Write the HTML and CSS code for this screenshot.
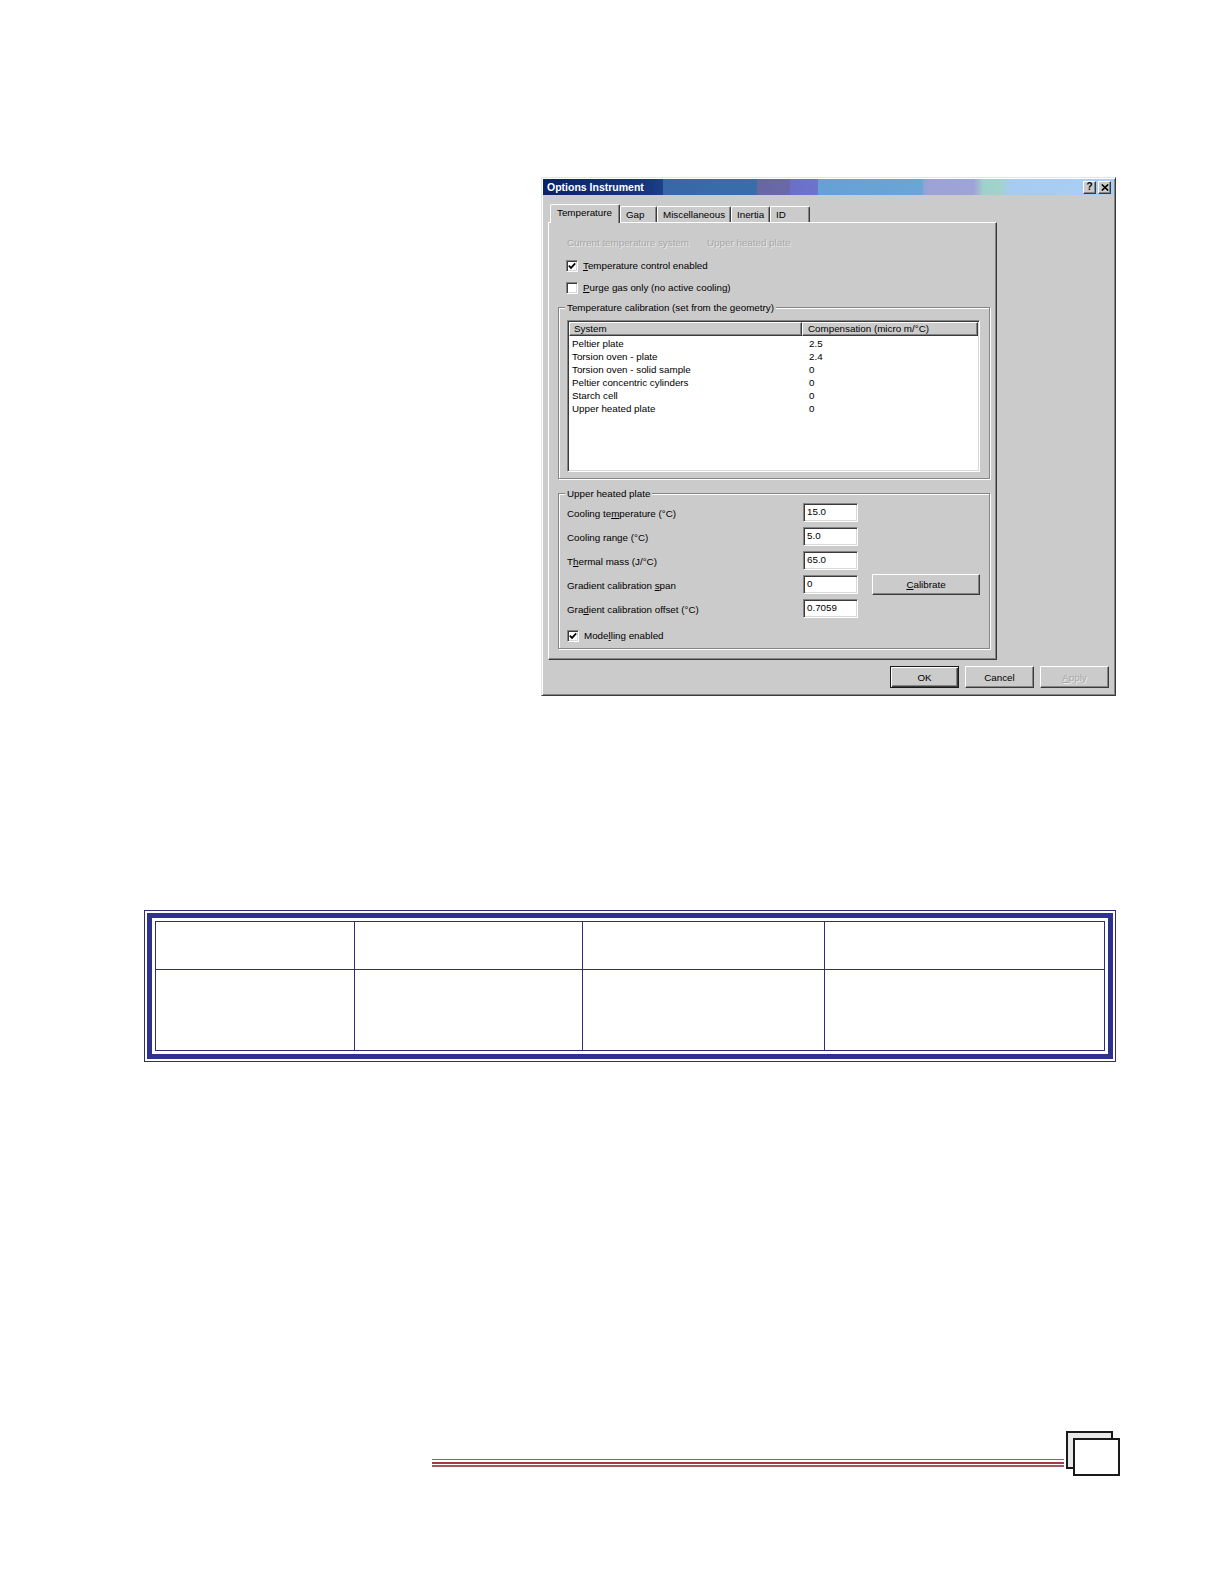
FILE: index.html
```html
<!DOCTYPE html>
<html>
<head>
<meta charset="utf-8">
<title>Options Instrument</title>
<link rel="stylesheet" href="styles.css">
</head>
<body>
<div class="page">
  <div class="dialog-wrap">
    <div class="dialog">
      <div class="titlebar">
        <span class="title">Options Instrument</span>
        <div class="tb-buttons">
          <span class="tb-btn help">?</span>
          <span class="tb-btn close"><svg width="8" height="7" viewBox="0 0 8 7"><path d="M0.8 0.5 L7.2 6.5 M7.2 0.5 L0.8 6.5" stroke="#000" stroke-width="1.6" fill="none"/></svg></span>
        </div>
      </div>
      <div class="tabs">
        <div class="tab sel w-temp">Temperature</div>
        <div class="tab w-gap">Gap</div>
        <div class="tab w-misc">Miscellaneous</div>
        <div class="tab w-inertia">Inertia</div>
        <div class="tab w-id">ID</div>
      </div>
      <div class="panel">
        <div class="info-row disabled"><span class="info-label">Current temperature system</span><span>Upper heated plate</span></div>
        <div class="check-row first"><span class="cb"><svg width="8" height="8" viewBox="0 0 8 8"><path d="M0.8 3.6 L3 5.9 L7.2 1.4" stroke="#000" stroke-width="1.7" fill="none"/></svg></span><span><u>T</u>emperature control enabled</span></div>
        <div class="check-row second"><span class="cb"></span><span><u>P</u>urge gas only (no active cooling)</span></div>

        <div class="group g1">
          <div class="group-title">Temperature calibration (set from the geometry)</div>
          <div class="listview">
            <div class="lv-head">
              <div class="lv-h c1">System</div>
              <div class="lv-h c2">Compensation (micro m/°C)</div>
            </div>
            <div class="lv-row"><span class="c1">Peltier plate</span><span class="c2">2.5</span></div>
            <div class="lv-row"><span class="c1">Torsion oven - plate</span><span class="c2">2.4</span></div>
            <div class="lv-row"><span class="c1">Torsion oven - solid sample</span><span class="c2">0</span></div>
            <div class="lv-row"><span class="c1">Peltier concentric cylinders</span><span class="c2">0</span></div>
            <div class="lv-row"><span class="c1">Starch cell</span><span class="c2">0</span></div>
            <div class="lv-row"><span class="c1">Upper heated plate</span><span class="c2">0</span></div>
          </div>
        </div>

        <div class="group g2">
          <div class="group-title">Upper heated plate</div>
          <div class="field-row"><span class="f-label">Cooling te<u>m</u>perature (°C)</span><span class="input">15.0</span></div>
          <div class="field-row"><span class="f-label">Cooling range (°C)</span><span class="input">5.0</span></div>
          <div class="field-row"><span class="f-label">T<u>h</u>ermal mass (J/°C)</span><span class="input">65.0</span></div>
          <div class="field-row"><span class="f-label">Gradient calibration <u>s</u>pan</span><span class="input">0</span><span class="btn calib"><u>C</u>alibrate</span></div>
          <div class="field-row"><span class="f-label">Gra<u>d</u>ient calibration offset (°C)</span><span class="input">0.7059</span></div>
          <div class="check-row model"><span class="cb"><svg width="8" height="8" viewBox="0 0 8 8"><path d="M0.8 3.6 L3 5.9 L7.2 1.4" stroke="#000" stroke-width="1.7" fill="none"/></svg></span><span>Mode<u>l</u>ling enabled</span></div>
        </div>
      </div>
      <div class="actions">
        <span class="btn default">OK</span>
        <span class="btn">Cancel</span>
        <span class="btn disabled-btn"><u>A</u>pply</span>
      </div>
    </div>
  </div>

  <div class="tbl-outer">
    <div class="tbl-band">
      <table class="grid">
        <colgroup><col class="k1"><col class="k2"><col class="k3"><col></colgroup>
        <tr class="hrow"><td></td><td></td><td></td><td></td></tr>
        <tr class="brow"><td></td><td></td><td></td><td></td></tr>
      </table>
    </div>
  </div>

  <div class="footer">
    <div class="rule"></div>
    <div class="pagebox"><div class="pagebox-front"></div></div>
  </div>
</div>
</body>
</html>
```

FILE: styles.css
```css
* { box-sizing: border-box; }
html, body { margin: 0; padding: 0; background: #fff; }
body {
  font-family: "Liberation Sans", Arial, sans-serif;
  font-size: 9.8px;
  color: #000;
}
u { text-decoration: underline; text-underline-offset: 1px; }

.page {
  width: 1224px;
  height: 1584px;
  overflow: hidden;
  display: flex;
  flex-direction: column;
}

/* ---------- dialog ---------- */
.dialog-wrap { padding: 177px 0 0 541px; }
.dialog {
  width: 575px;
  height: 519px;
  background: #cbcbcb;
  border: 1px solid;
  border-color: #e4e4e4 #3a3a3a #3a3a3a #e4e4e4;
  padding: 1px;
  box-shadow: inset 1px 1px 0 #fff, inset -1px -1px 0 #858585;
  display: flex;
  flex-direction: column;
}

.titlebar {
  height: 16px;
  flex: none;
  display: flex;
  align-items: center;
  justify-content: space-between;
  padding: 0 3px 0 4px;
  background:
    linear-gradient(to right,
      #0a2266 0px, #17397f 110px, #1d428a 120px,
      #3568a5 120px, #3a6eab 214px,
      #6767a4 214px, #6a68aa 247px,
      #6b70c6 247px, #6c74cc 275px,
      #66a1d5 275px, #6aa5d8 379px,
      #8ea4d8 381px, #9ea2d6 386px, #9ea4d8 431px,
      #9ed1cb 440px, #a1d3cc 456px,
      #a6ccf1 468px, #a8cef3 571px);
}
.title {
  color: #fff;
  font-weight: bold;
  font-size: 10.5px;
  line-height: 16px;
}
.tb-buttons { display: flex; gap: 2px; }
.tb-btn {
  width: 13px;
  height: 13px;
  background: #cbcbcb;
  border: 1px solid;
  border-color: #fff #3a3a3a #3a3a3a #fff;
  box-shadow: inset -1px -1px 0 #858585;
  display: flex;
  align-items: center;
  justify-content: center;
  font-weight: bold;
  font-size: 10px;
  line-height: 10px;
  color: #000;
}

/* tabs */
.tabs {
  height: 27px;
  flex: none;
  padding: 0 0 0 7px;
  display: flex;
  align-items: flex-end;
}
.tab {
  height: 16px;
  border-top: 1px solid #fff;
  border-left: 1px solid #fff;
  border-right: 1px solid #3a3a3a;
  box-shadow: inset -1px 0 0 #858585;
  border-radius: 2px 2px 0 0;
  padding-left: 5px;
  line-height: 15px;
  white-space: nowrap;
  background: #cbcbcb;
}
.tab.sel {
  position: relative;
  height: 19px;
  margin-bottom: -1px;
  padding-left: 6px;
  line-height: 16px;
}
.w-temp { width: 70px; }
.w-gap { width: 37px; }
.w-misc { width: 74px; }
.w-inertia { width: 39px; }
.w-id { width: 40px; }

.panel {
  flex: none;
  width: 449px;
  height: 438px;
  margin-left: 5px;
  border: 1px solid;
  border-color: #fff #3a3a3a #3a3a3a #fff;
  box-shadow: inset -1px -1px 0 #858585;
  padding: 13px 0 0 9px;
}

.info-row {
  height: 13px;
  line-height: 13px;
  margin-left: 9px;
  display: flex;
}
.info-label { width: 140px; }
.disabled {
  color: #a7a7a7;
  text-shadow: 1px 1px 0 #e9e9e9;
}

.check-row {
  height: 13px;
  line-height: 13px;
  margin: 10px 0 0 8px;
  display: flex;
  align-items: center;
  gap: 5px;
}
.check-row.second { margin-top: 9px; }
.cb {
  width: 12px;
  height: 12px;
  flex: none;
  background: #fff;
  border: 1px solid;
  border-color: #858585 #fff #fff #858585;
  box-shadow: inset 1px 1px 0 #3a3a3a, inset -1px -1px 0 #d8d8d8;
  display: flex;
  align-items: center;
  justify-content: center;
}

/* groups */
.group {
  width: 432px;
  border: 1px solid #858585;
  box-shadow: inset 1px 1px 0 #fff, 1px 1px 0 #fff;
  padding: 0 0 6px 8px;
}
.g1 { margin-top: 13px; }
.g2 { margin-top: 14px; padding-bottom: 6px; }
.group-title {
  width: max-content;
  margin: -7px 0 0 -2px;
  padding: 0 2px;
  line-height: 13px;
  background: #cbcbcb;
}
.g1 .group-title { margin-bottom: 6px; }

.listview {
  width: 413px;
  height: 152px;
  background: #fff;
  border: 1px solid;
  border-color: #858585 #fff #fff #858585;
  box-shadow: inset 1px 1px 0 #3a3a3a, inset -1px -1px 0 #d8d8d8;
  padding: 1px;
}
.lv-head {
  display: flex;
  height: 14px;
}
.lv-h {
  background: #cbcbcb;
  border: 1px solid;
  border-color: #fff #3a3a3a #3a3a3a #fff;
  box-shadow: inset -1px -1px 0 #858585;
  line-height: 12px;
  white-space: nowrap;
}
.lv-h.c1 { width: 233px; padding-left: 4px; }
.lv-h.c2 { flex: 1; padding-left: 5px; }
.lv-row {
  display: flex;
  height: 13px;
  line-height: 13px;
}
.lv-head + .lv-row { margin-top: 1px; }
.lv-row .c1 { width: 233px; padding-left: 3px; }
.lv-row .c2 { padding-left: 7px; }

.field-row {
  height: 24px;
  display: flex;
  align-items: center;
}
.f-label {
  width: 236px;
  padding-top: 3px;
}
.input {
  width: 55px;
  height: 19px;
  background: #fff;
  border: 1px solid;
  border-color: #858585 #fff #fff #858585;
  box-shadow: inset 1px 1px 0 #3a3a3a, inset -1px -1px 0 #d8d8d8;
  padding: 1px 0 0 3px;
  line-height: 13px;
  color: #000;
}
.check-row.model { margin: 9px 0 0 0; }

/* buttons */
.btn {
  height: 21px;
  background: #cbcbcb;
  border: 1px solid;
  border-color: #fff #3a3a3a #3a3a3a #fff;
  box-shadow: inset -1px -1px 0 #858585;
  display: flex;
  align-items: center;
  justify-content: center;
  line-height: 13px;
}
.calib { width: 108px; margin-left: 14px; }
.actions {
  flex: none;
  display: flex;
  justify-content: flex-end;
  gap: 6px;
  margin-top: 6px;
  padding-right: 5px;
}
.actions .btn { width: 69px; height: 22px; }
.btn.default {
  border: 1px solid #1a1a1a;
  box-shadow: inset 1px 1px 0 #fff, inset -1px -1px 0 #3a3a3a, inset -2px -2px 0 #858585;
}
.disabled-btn {
  color: #a7a7a7;
  text-shadow: 1px 1px 0 #ededed;
}

/* ---------- framed table ---------- */
.tbl-outer {
  flex: none;
  margin: 214px 0 0 144px;
  width: 972px;
  height: 152px;
  border: 1px solid #2f2d74;
  padding: 2px;
}
.tbl-band {
  height: 100%;
  border: 5px solid #2e3190;
  padding: 3px;
}
.grid {
  width: 100%;
  height: 100%;
  border-collapse: collapse;
  table-layout: fixed;
}
.grid td { border: 1px solid #302d78; padding: 0; }
.grid .k1 { width: 199px; }
.grid .k2 { width: 228px; }
.grid .k3 { width: 242px; }
.hrow { height: 48px; }

/* ---------- footer ---------- */
.footer {
  flex: none;
  margin: 369px 0 0 432px;
  display: flex;
  align-items: flex-start;
}
.rule {
  width: 632px;
  height: 8px;
  margin-top: 27.5px;
  background: linear-gradient(to bottom,
    #aa555d 0px, #aa555d 1.5px,
    transparent 1.5px, transparent 3px,
    #9d3e47 3px, #9d3e47 5px,
    transparent 5px, transparent 6.5px,
    #aa555d 6.5px, #aa555d 8px);
}
.pagebox {
  position: relative;
  width: 47px;
  height: 38px;
  margin-left: 2px;
  background: #e8e8e8;
  border: 2px solid #1a1a1a;
}
.pagebox-front {
  position: absolute;
  left: 5px;
  top: 5px;
  width: 47px;
  height: 38px;
  background: #fff;
  border: 2px solid #1a1a1a;
}
```
